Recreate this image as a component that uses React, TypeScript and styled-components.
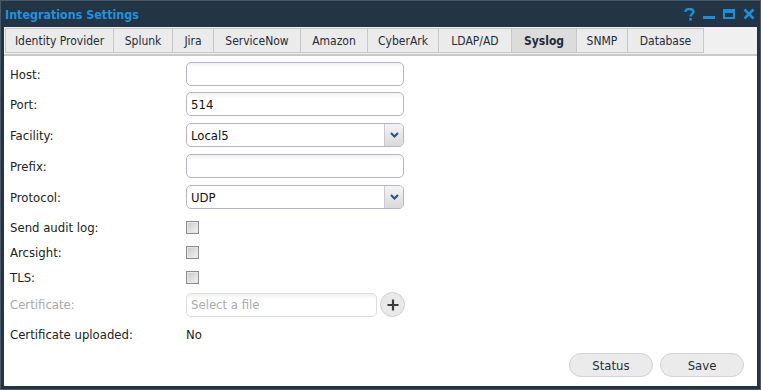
import React from "react";
import styled, { createGlobalStyle } from "styled-components";

// Styles

const GlobalStyle = createGlobalStyle`
  html, body {
    margin: 0;
    padding: 0;
    background: #233447;
  }
  * {
    box-sizing: border-box;
  }
`;

const Window = styled.div`
  width: 761px;
  height: 390px;
  display: flex;
  flex-direction: column;
  background: #233447;
  border: 1px solid #4a5968;
  padding: 0 3px 3px 3px;
  font-family: "DejaVu Sans Condensed", "DejaVu Sans", sans-serif;
  font-size: 13px;
  color: #222;
`;

const TitleBar = styled.header`
  height: 26px;
  display: flex;
  align-items: center;
  justify-content: space-between;
  padding: 0 2px 0 1px;
`;

const Title = styled.h1`
  margin: 0;
  font-size: 12.4px;
  font-weight: bold;
  color: #1f93dc;
`;

const Controls = styled.div`
  display: flex;
  align-items: center;
  gap: 8px;
  color: #1d8fd6;

  & > svg {
    display: block;
  }
`;

const Body = styled.section`
  flex: 1;
  display: flex;
  flex-direction: column;
  background: #fff;
`;

const TabBar = styled.nav`
  height: 29px;
  display: flex;
  align-items: flex-end;
  padding: 0 0 0 1px;
  background: #f0f0f0;
  border-bottom: 2px solid #c9c9c9;
`;

const Tab = styled.div<{ $active?: boolean; $w: number }>`
  width: ${(p) => p.$w}px;
  height: 25px;
  margin-bottom: 1px;
  display: flex;
  align-items: center;
  justify-content: center;
  background: ${(p) => (p.$active ? "#dcdcdc" : "#ebebeb")};
  border: 1px solid #c6c6c6;
  border-left: none;
  font-size: 12px;
  font-weight: ${(p) => (p.$active ? "bold" : "normal")};
  color: #1f2c3a;
  white-space: nowrap;

  &:first-child {
    border-left: 1px solid #c6c6c6;
  }
`;

const Form = styled.div`
  flex: 1;
  display: flex;
  flex-direction: column;
  padding: 6px 13px 9px 6px;
`;

const Row = styled.div<{ $h: number; $gap?: number }>`
  height: ${(p) => p.$h}px;
  margin-bottom: ${(p) => p.$gap ?? 0}px;
  display: flex;
  align-items: center;
`;

const Label = styled.label<{ $disabled?: boolean }>`
  width: 176px;
  color: ${(p) => (p.$disabled ? "#a8a8a8" : "#222")};
`;

const TextBox = styled.div<{ $w?: number; $disabled?: boolean }>`
  width: ${(p) => p.$w ?? 218}px;
  height: 24px;
  display: flex;
  align-items: center;
  padding: 0 4px;
  border: 1px solid ${(p) => (p.$disabled ? "#dcdce2" : "#b5b5c9")};
  border-radius: 5px;
  background: linear-gradient(#f1f1f1 0, #fff 5px);
  color: ${(p) => (p.$disabled ? "#ababab" : "#111")};
`;

const Select = styled.div`
  width: 218px;
  height: 24px;
  display: flex;
  border: 1px solid #b5b5c9;
  border-radius: 5px;
  overflow: hidden;
  background: #fff;
`;

const SelectValue = styled.div`
  flex: 1;
  display: flex;
  align-items: center;
  padding: 0 4px;
  color: #111;
`;

const SelectArrow = styled.div`
  width: 19px;
  display: flex;
  align-items: center;
  justify-content: center;
  border-left: 1px solid #c9c9d6;
  background: linear-gradient(#f4f4f4, #d9d9d9);
`;

const Check = styled.span`
  width: 13px;
  height: 13px;
  border: 1px solid #8c8c8c;
  background: linear-gradient(135deg, #c8c8cc, #f4f4f6);
  box-shadow: inset 0 0 0 1px #e8e8e8;
`;

const PlusButton = styled.button`
  width: 25px;
  height: 25px;
  margin-left: 3px;
  padding: 0;
  display: flex;
  align-items: center;
  justify-content: center;
  border: 1px solid #cfcfcf;
  border-radius: 50%;
  background: #e9e9e9;
`;

const Footer = styled.footer`
  margin-top: auto;
  display: flex;
  justify-content: flex-end;
  gap: 7px;
`;

const Button = styled.button`
  width: 84px;
  height: 24px;
  border: 1px solid #d2d2d2;
  border-radius: 12px;
  background: #ebebeb;
  font-family: inherit;
  font-size: 13px;
  color: #1f2c3a;
`;

// ================================

const tabs: [string, number][] = [
  ["Identity Provider", 109],
  ["Splunk", 59],
  ["Jira", 41],
  ["ServiceNow", 87],
  ["Amazon", 67],
  ["CyberArk", 71],
  ["LDAP/AD", 73],
  ["Syslog", 65],
  ["SNMP", 51],
  ["Database", 76],
];

const Arrow = () => (
  <svg width="9" height="6" viewBox="0 0 9 6">
    <path d="M1 1 L4.5 4.5 L8 1" stroke="#2a4f86" strokeWidth="2" fill="none" />
  </svg>
);

const App: React.FC = () => {
  return (
    <Window>
      <GlobalStyle />
      <TitleBar>
        <Title>Integrations Settings</Title>
        <Controls>
          <svg width="11" height="13" viewBox="0 0 11 13">
            <path
              d="M1.5 4 C1.5 1.5 3.5 1 5.5 1 C8 1 9.5 2.2 9.5 4 C9.5 6 6.5 6.3 6.5 8.5"
              stroke="currentColor"
              strokeWidth="2.4"
              fill="none"
            />
            <rect x="5.2" y="10" width="2.6" height="2.6" fill="currentColor" />
          </svg>
          <svg width="12" height="13" viewBox="0 0 12 13">
            <rect x="0" y="8" width="12" height="3" fill="currentColor" />
          </svg>
          <svg width="12" height="13" viewBox="0 0 12 13">
            <rect x="1" y="2" width="10" height="8" stroke="currentColor" strokeWidth="2" fill="none" />
            <rect x="1" y="2" width="10" height="3" fill="currentColor" />
          </svg>
          <svg width="12" height="13" viewBox="0 0 12 13">
            <path d="M1.5 1.5 L10.5 10.5 M10.5 1.5 L1.5 10.5" stroke="currentColor" strokeWidth="2.6" />
          </svg>
        </Controls>
      </TitleBar>
      <Body>
        <TabBar>
          {tabs.map(([name, w]) => (
            <Tab key={name} $w={w} $active={name === "Syslog"}>
              {name}
            </Tab>
          ))}
        </TabBar>
        <Form>
          <Row $h={24} $gap={6}>
            <Label>Host:</Label>
            <TextBox />
          </Row>
          <Row $h={24} $gap={7}>
            <Label>Port:</Label>
            <TextBox>514</TextBox>
          </Row>
          <Row $h={24} $gap={7}>
            <Label>Facility:</Label>
            <Select>
              <SelectValue>Local5</SelectValue>
              <SelectArrow>
                <Arrow />
              </SelectArrow>
            </Select>
          </Row>
          <Row $h={24} $gap={7}>
            <Label>Prefix:</Label>
            <TextBox />
          </Row>
          <Row $h={24} $gap={6}>
            <Label>Protocol:</Label>
            <Select>
              <SelectValue>UDP</SelectValue>
              <SelectArrow>
                <Arrow />
              </SelectArrow>
            </Select>
          </Row>
          <Row $h={25}>
            <Label>Send audit log:</Label>
            <Check />
          </Row>
          <Row $h={25}>
            <Label>Arcsight:</Label>
            <Check />
          </Row>
          <Row $h={25} $gap={2}>
            <Label>TLS:</Label>
            <Check />
          </Row>
          <Row $h={25} $gap={5}>
            <Label $disabled>Certificate:</Label>
            <TextBox $w={191} $disabled>
              Select a file
            </TextBox>
            <PlusButton>
              <svg width="12" height="12" viewBox="0 0 12 12">
                <path d="M6 0.5 V11.5 M0.5 6 H11.5" stroke="#3a3a3a" strokeWidth="2.2" />
              </svg>
            </PlusButton>
          </Row>
          <Row $h={24}>
            <Label>Certificate uploaded:</Label>
            <span>No</span>
          </Row>
          <Footer>
            <Button>Status</Button>
            <Button>Save</Button>
          </Footer>
        </Form>
      </Body>
    </Window>
  );
};

export default App;
